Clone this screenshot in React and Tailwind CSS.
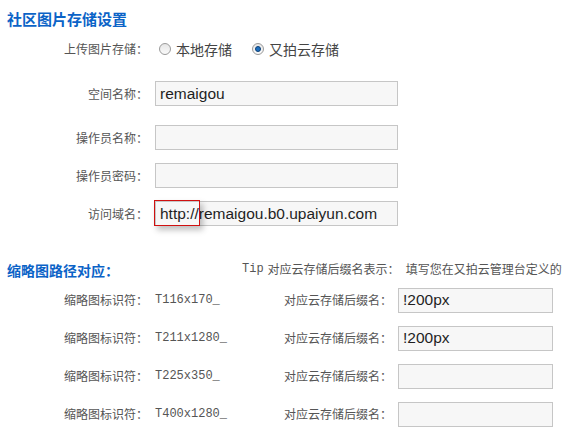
const CJK = '"Noto Sans CJK SC", sans-serif';

const Label = ({ children, className = '' }) => (
  <div className={`w-[148px] shrink-0 text-right text-[12px] text-[#555] ${className}`}>{children}</div>
);

const Field = ({ value, className = '' }) => (
  <div
    className={`h-[25px] border border-[#c6c6c6] bg-[#f7f7f7] flex items-center pl-[4px] text-[15.5px] text-[#1f1f1f] whitespace-nowrap ${className}`}
    style={{ fontFamily: '"Liberation Sans", Arial, sans-serif' }}
  >
    {value}
  </div>
);

const Radio = ({ checked, label }) => (
  <div className="flex items-center gap-[5px]">
    <span className="w-[12px] h-[12px] rounded-full border border-[#9a9a9a] bg-gradient-to-b from-[#e6e6e6] to-[#fafafa] flex items-center justify-center">
      {checked && <span className="w-[6px] h-[6px] rounded-full bg-[#1d6fbf] border border-[#0d3f75]" />}
    </span>
    <span className="text-[14px] text-[#444]">{label}</span>
  </div>
);

const rows = [
  { id: 'T116x170_', ext: '!200px' },
  { id: 'T211x1280_', ext: '!200px' },
  { id: 'T225x350_', ext: '' },
  { id: 'T400x1280_', ext: '' },
];

export default function App() {
  return (
    <div className="w-[562px] h-[431px] overflow-hidden bg-white" style={{ fontFamily: CJK }}>
      <h2 className="pt-[9px] pl-[7px] text-[15px] leading-[20px] font-bold text-[#0b63c7]">社区图片存储设置</h2>

      <div className="mt-[8px] flex items-center h-[24px]">
        <Label>上传图片存储：</Label>
        <div className="ml-[11px] flex items-center gap-[20px]">
          <Radio label="本地存储" />
          <Radio checked label="又拍云存储" />
        </div>
      </div>

      <div className="mt-[20px] flex items-center">
        <Label>空间名称：</Label>
        <Field value="remaigou" className="ml-[7px] w-[243px]" />
      </div>
      <div className="mt-[19px] flex items-center">
        <Label>操作员名称：</Label>
        <Field className="ml-[7px] w-[243px]" />
      </div>
      <div className="mt-[13px] flex items-center">
        <Label>操作员密码：</Label>
        <Field className="ml-[7px] w-[243px]" />
      </div>
      <div className="mt-[13px] flex items-center">
        <Label>访问域名：</Label>
        <div className="relative ml-[7px]">
          <Field value="http://remaigou.b0.upaiyun.com" className="w-[243px]" />
          <div className="absolute left-[-1px] top-[-1px] w-[46px] h-[26px] border border-[#d01010] shadow-[3px_4px_6px_rgba(0,0,0,0.25)]" />
        </div>
      </div>

      <div className="mt-[33px] flex items-center h-[20px] whitespace-nowrap overflow-hidden">
        <h3 className="pl-[7px] w-[242px] shrink-0 text-[14px] font-bold text-[#0b63c7] mt-[3px]">缩略图路径对应：</h3>
        <div className="text-[12px] text-[#555] flex items-center">
          <span style={{ fontFamily: '"Liberation Mono", monospace' }}>Tip</span>
          <span className="ml-[4px]">对应云存储后缀名表示：</span>
          <span className="ml-[6px]">填写您在又拍云管理台定义的缩略图版本名称</span>
        </div>
      </div>

      <div className="mt-[9px] flex flex-col gap-[14px]">
        {rows.map(r => (
          <div key={r.id} className="flex items-center h-[24px]">
            <Label>缩略图标识符：</Label>
            <div
              className="ml-[7px] w-[111px] shrink-0 text-[12px] text-[#555]"
              style={{ fontFamily: '"Liberation Mono", monospace' }}
            >
              {r.id}
            </div>
            <div className="w-[126px] shrink-0 text-right text-[12px] text-[#555]">对应云存储后缀名：</div>
            <Field value={r.ext} className="ml-[6px] w-[155px] h-[24px]" />
          </div>
        ))}
      </div>
    </div>
  );
}
